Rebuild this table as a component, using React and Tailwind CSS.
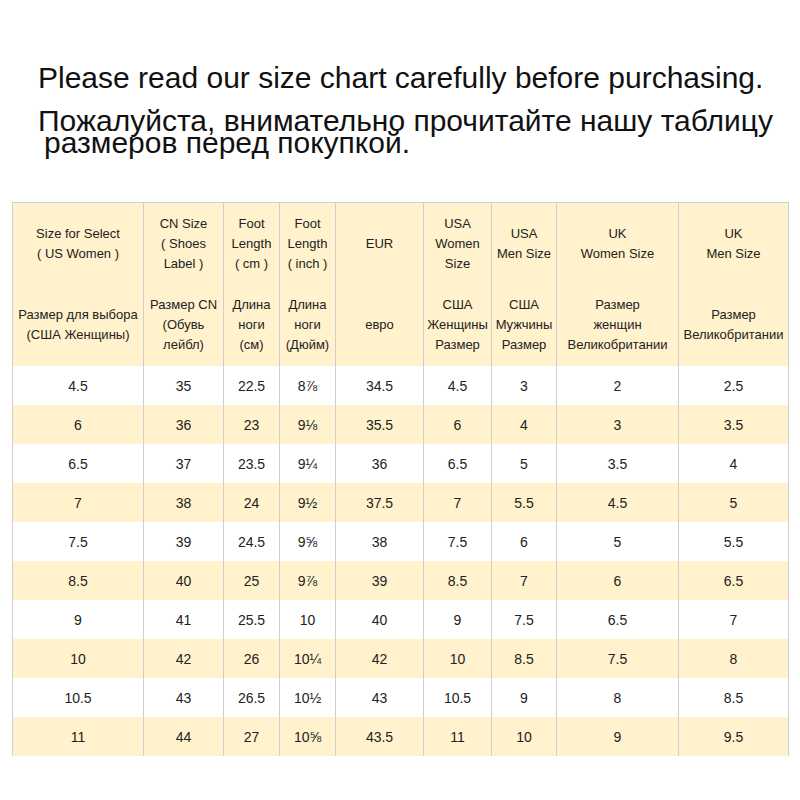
const columns = [
  { w: "w-[131px]", en: ["Size for Select", "( US Women )"], ru: ["Размер для выбора", "(США Женщины)"] },
  { w: "w-[80px]", en: ["CN Size", "( Shoes", "Label )"], ru: ["Размер CN", "(Обувь", "лейбл)"] },
  { w: "w-[56px]", en: ["Foot", "Length", "( cm )"], ru: ["Длина", "ноги", "(см)"] },
  { w: "w-[56px]", en: ["Foot", "Length", "( inch )"], ru: ["Длина", "ноги", "(Дюйм)"] },
  { w: "w-[88px]", en: ["EUR"], ru: ["евро"] },
  { w: "w-[68px]", en: ["USA", "Women", "Size"], ru: ["США", "Женщины", "Размер"] },
  { w: "w-[65px]", en: ["USA", "Men Size"], ru: ["США", "Мужчины", "Размер"] },
  { w: "w-[122px]", en: ["UK", "Women Size"], ru: ["Размер", "женщин", "Великобритании"] },
  { w: "w-[110px]", en: ["UK", "Men Size"], ru: ["Размер", "Великобритании"] },
];

const rows = [
  ["4.5", "35", "22.5", "8⅞", "34.5", "4.5", "3", "2", "2.5"],
  ["6", "36", "23", "9⅛", "35.5", "6", "4", "3", "3.5"],
  ["6.5", "37", "23.5", "9¼", "36", "6.5", "5", "3.5", "4"],
  ["7", "38", "24", "9½", "37.5", "7", "5.5", "4.5", "5"],
  ["7.5", "39", "24.5", "9⅝", "38", "7.5", "6", "5", "5.5"],
  ["8.5", "40", "25", "9⅞", "39", "8.5", "7", "6", "6.5"],
  ["9", "41", "25.5", "10", "40", "9", "7.5", "6.5", "7"],
  ["10", "42", "26", "10¼", "42", "10", "8.5", "7.5", "8"],
  ["10.5", "43", "26.5", "10½", "43", "10.5", "9", "8", "8.5"],
  ["11", "44", "27", "10⅝", "43.5", "11", "10", "9", "9.5"],
];

const Lines = ({ lines }) => (
  <div className="flex flex-1 flex-col items-center justify-center">
    {lines.map((l) => (
      <span key={l} className="whitespace-nowrap">
        {l}
      </span>
    ))}
  </div>
);

export default function App() {
  return (
    <div
      className="w-[800px] h-[800px] bg-white text-[#111] overflow-hidden"
      style={{ fontFamily: '"Liberation Sans", Arial, sans-serif' }}
    >
      {/* heading */}
      <div className="pt-[61px] pl-[38px] text-[30px]">
        <p className="leading-[34px] whitespace-nowrap">
          Please read our size chart carefully before purchasing.
        </p>
        <p className="mt-[15px] leading-[22px] whitespace-nowrap">
          Пожалуйста, внимательно прочитайте нашу таблицу
          <br />
          <span className="pl-[6px]">размеров перед покупкой.</span>
        </p>
      </div>

      {/* size table */}
      <table className="mt-[48px] ml-[12px] w-[776px] table-fixed border-collapse text-[13px] leading-[20px] text-[#222]">
        <thead>
          <tr className="bg-[#fff2cc]">
            {columns.map((c, i) => (
              <th
                key={i}
                className={`${c.w} h-[163px] p-0 font-normal border-x border-t border-[#cfcfcf]`}
              >
                <div className="flex h-[163px] flex-col">
                  <Lines lines={c.en} />
                  <Lines lines={c.ru} />
                </div>
              </th>
            ))}
          </tr>
        </thead>
        <tbody>
          {rows.map((r, ri) => (
            <tr key={ri} className={ri % 2 === 1 ? "bg-[#fff2cc]" : "bg-white"}>
              {r.map((v, ci) => (
                <td
                  key={ci}
                  className="h-[39px] p-0 text-center text-[14px] border-x border-[#cfcfcf]"
                >
                  {v}
                </td>
              ))}
            </tr>
          ))}
        </tbody>
      </table>
    </div>
  );
}
